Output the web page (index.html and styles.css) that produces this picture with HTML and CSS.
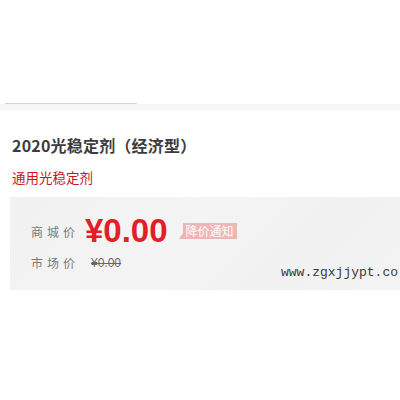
FILE: index.html
```html
<!DOCTYPE html>
<html lang="zh-CN">
<head>
    <meta charset="UTF-8">
    <title>2020光稳定剂（经济型）</title>
    <link rel="stylesheet" href="styles.css">
</head>
<body>
    <div class="page">
        <div class="tabs">
            <div class="tab-line"></div>
            <div class="tab-band"></div>
        </div>

        <div class="info">
            <h1 class="title">2020光稳定剂（经济型）</h1>
            <p class="subtitle">通用光稳定剂</p>

            <div class="price-box">
                <div class="row">
                    <span class="label">商城价</span>
                    <span class="price">¥0.00</span>
                    <span class="notice">降价通知</span>
                </div>
                <div class="row row-market">
                    <span class="label">市场价</span>
                    <span class="old-price">¥0.00</span>
                </div>
                <span class="mark">www.zgxjjypt.co</span>
            </div>
        </div>
    </div>
</body>
</html>
```

FILE: styles.css
```css
body{
    margin: 0;
    background: #fff;
    font-family: "Noto Sans CJK SC", "Noto Sans", sans-serif;
}
.page{
    width: 400px;
    height: 400px;
    overflow: hidden;
}
.tabs{
    padding-top: 103px;
}
.tab-line{
    width: 132px;
    margin-left: 5px;
    border-top: 1px solid #d4d4d4;
}
.tab-band{
    height: 6px;
    background: #f7f7f7;
}

.info{
    padding-left: 12px;
}
.title{
    margin: 20px 0 0;
    font-size: 16px;
    line-height: 30px;
    font-weight: bold;
    color: #3c3c3c;
    letter-spacing: 0.2px;
}
.subtitle{
    margin: 7px 0 0;
    font-size: 13.5px;
    line-height: 20px;
    color: #c8161d;
}

.price-box{
    position: relative;
    margin: 10px 0 0 -2px;
    height: 93px;
    padding: 17px 0 0 21px;
    box-sizing: border-box;
    background: linear-gradient(135deg, #f1f1f1 0%, #f4f4f4 45%, #f1f1f1 70%, #f3f3f3 100%);
}
.row{
    display: flex;
    align-items: center;
}
.label{
    font-size: 12px;
    letter-spacing: 4px;
    color: #7a7a7a;
    width: 54px;
}
.price{
    font-family: "Liberation Sans", Arial, sans-serif;
    font-size: 33px;
    font-weight: bold;
    line-height: 34px;
    color: #e31e26;
}
.notice{
    position: relative;
    margin-left: 15px;
    padding: 0 3px;
    font-size: 12px;
    line-height: 16px;
    color: #fff;
    background: #efb6b6;
}
.notice::before{
    content: "";
    position: absolute;
    left: -4px;
    bottom: 0;
    border-right: 4px solid #efb6b6;
    border-top: 6px solid transparent;
}
.row-market{
    margin-top: 6px;
}
.old-price{
    font-family: "Liberation Sans", Arial, sans-serif;
    font-size: 12px;
    color: #666;
    text-decoration: line-through;
    margin-left: 6px;
}
.mark{
    position: absolute;
    left: 271px;
    top: 68px;
    font-family: "Liberation Mono", monospace;
    font-size: 13px;
    color: #3a3a3a;
    white-space: nowrap;
}
```
